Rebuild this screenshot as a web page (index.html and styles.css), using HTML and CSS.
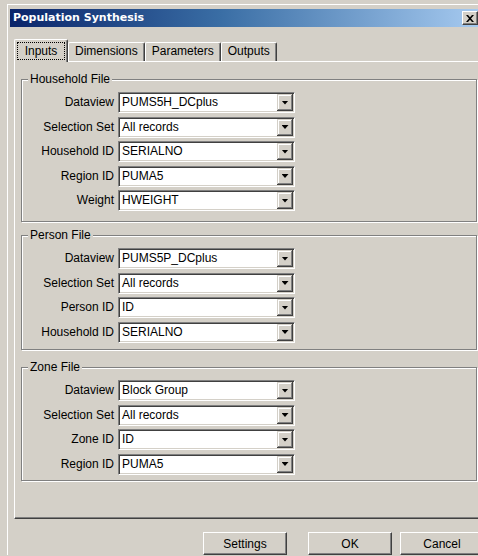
FILE: index.html
```html
<!DOCTYPE html>
<html lang="en">
<head>
<meta charset="utf-8">
<title>Population Synthesis</title>
<link rel="stylesheet" href="styles.css">
</head>
<body>
<div class="window">
  <div class="caption">
    <span class="caption-title">Population Synthesis</span>
    <span class="caption-close">
      <svg width="8" height="7" viewBox="0 0 8 7"><path d="M0 0h2l2 2.3L6 0h2L5 3.5 8 7H6L4 4.7 2 7H0l3-3.5z" fill="#000"/></svg>
    </span>
  </div>
  <div class="client">
    <div class="tabs">
      <div class="tab tab-active"><span class="tab-focus">Inputs</span></div>
      <div class="tab">Dimensions</div>
      <div class="tab">Parameters</div>
      <div class="tab">Outputs</div>
    </div>
    <div class="panel">
      <section class="group group-household">
        <div class="legend">Household File</div>
        <div class="fields">
          <label class="field-label">Dataview</label>
          <div class="combo"><span class="combo-value">PUMS5H_DCplus</span><span class="combo-drop"></span></div>
          <label class="field-label">Selection Set</label>
          <div class="combo"><span class="combo-value">All records</span><span class="combo-drop"></span></div>
          <label class="field-label">Household ID</label>
          <div class="combo"><span class="combo-value">SERIALNO</span><span class="combo-drop"></span></div>
          <label class="field-label">Region ID</label>
          <div class="combo"><span class="combo-value">PUMA5</span><span class="combo-drop"></span></div>
          <label class="field-label">Weight</label>
          <div class="combo"><span class="combo-value">HWEIGHT</span><span class="combo-drop"></span></div>
        </div>
      </section>
      <section class="group group-person">
        <div class="legend">Person File</div>
        <div class="fields">
          <label class="field-label">Dataview</label>
          <div class="combo"><span class="combo-value">PUMS5P_DCplus</span><span class="combo-drop"></span></div>
          <label class="field-label">Selection Set</label>
          <div class="combo"><span class="combo-value">All records</span><span class="combo-drop"></span></div>
          <label class="field-label">Person ID</label>
          <div class="combo"><span class="combo-value">ID</span><span class="combo-drop"></span></div>
          <label class="field-label">Household ID</label>
          <div class="combo"><span class="combo-value">SERIALNO</span><span class="combo-drop"></span></div>
        </div>
      </section>
      <section class="group group-zone">
        <div class="legend">Zone File</div>
        <div class="fields">
          <label class="field-label">Dataview</label>
          <div class="combo"><span class="combo-value">Block Group</span><span class="combo-drop"></span></div>
          <label class="field-label">Selection Set</label>
          <div class="combo"><span class="combo-value">All records</span><span class="combo-drop"></span></div>
          <label class="field-label">Zone ID</label>
          <div class="combo"><span class="combo-value">ID</span><span class="combo-drop"></span></div>
          <label class="field-label">Region ID</label>
          <div class="combo"><span class="combo-value">PUMA5</span><span class="combo-drop"></span></div>
        </div>
      </section>
    </div>
    <div class="buttons">
      <button class="btn btn-settings">Settings</button>
      <button class="btn btn-ok">OK</button>
      <button class="btn">Cancel</button>
    </div>
  </div>
</div>
</body>
</html>
```

FILE: styles.css
```css
html, body {
  margin: 0;
  background: #d4d0c8;
}

body {
  width: 478px;
  height: 556px;
  overflow: hidden;
  padding: 4px 0 0 7px;
  box-sizing: border-box;
  font-family: "Liberation Sans", Arial, sans-serif;
  font-size: 12px;
  color: #000;
}

/* dialog frame */
.window {
  width: 477px;
  border-top: 1px solid #fff;
  border-left: 1px solid #fff;
  padding: 4px 0 0 2px;
}

.caption {
  width: 470px;
  height: 18px;
  display: flex;
  align-items: center;
  justify-content: space-between;
  background: linear-gradient(to right, #0a246a 0%, #3a6ea5 45%, #a6caf0 100%);
}

.caption-title {
  padding-left: 3px;
  font-family: "DejaVu Sans", Verdana, sans-serif;
  font-weight: bold;
  font-size: 11px;
  color: #fff;
  line-height: 18px;
}

.caption-close {
  width: 16px;
  height: 14px;
  margin-right: 2px;
  box-sizing: border-box;
  background: #d4d0c8;
  border: 1px solid;
  border-color: #fff #404040 #404040 #fff;
  box-shadow: inset -1px -1px #808080;
  display: flex;
  align-items: center;
  justify-content: center;
}

.caption-close svg {
  display: block;
}

.client {
  padding: 12px 0 0 4px;
}

/* tab strip */
.tabs {
  display: flex;
  align-items: flex-end;
  padding-left: 2px;
  height: 22px;
}

.tab {
  height: 19px;
  box-sizing: border-box;
  padding: 0 6px 2px;
  border-top: 1px solid #fff;
  border-left: 1px solid #fff;
  border-right: 1px solid #404040;
  border-radius: 2px 2px 0 0;
  box-shadow: inset -1px 0 #808080;
  line-height: 16px;
  white-space: nowrap;
}

.tab-active {
  position: relative;
  z-index: 1;
  width: 54px;
  height: 23px;
  margin: 0 -2px -1px -2px;
  padding: 2px 0 0 2px;
  background: #d4d0c8;
}

.tab-active + .tab {
  margin-left: 2px;
}

.tab-focus {
  display: block;
  width: 48px;
  box-sizing: border-box;
  border: 1px dotted #000;
  text-align: center;
  line-height: 16px;
}

/* tab page */
.panel {
  width: 470px;
  height: 458px;
  box-sizing: border-box;
  border-top: 1px solid #fff;
  border-left: 1px solid #fff;
  border-right: 1px solid #404040;
  border-bottom: 1px solid #404040;
  box-shadow: inset -1px -1px #808080;
  padding: 17px 6px 0 6px;
}

/* etched group boxes */
.group {
  border: 1px solid #808080;
  box-shadow: inset 1px 1px #fff, 1px 1px #fff;
}

.group-household {
  padding-bottom: 10px;
}

.group-person {
  margin-top: 13px;
  padding-bottom: 6.5px;
}

.group-zone {
  margin-top: 17px;
  padding-bottom: 5.5px;
}

.legend {
  width: fit-content;
  margin: -8px 0 0 6px;
  padding: 0 2px;
  background: #d4d0c8;
  line-height: 14px;
}

.fields {
  display: grid;
  grid-template-columns: 92px 177px;
  column-gap: 4px;
  row-gap: 3.5px;
  margin-top: 6px;
}

.field-label {
  text-align: right;
  line-height: 21px;
  white-space: nowrap;
}

/* drop-down combo */
.combo {
  height: 21px;
  box-sizing: border-box;
  display: flex;
  align-items: stretch;
  background: #fff;
  border: 1px solid;
  border-color: #808080 #fff #fff #808080;
  box-shadow: inset 1px 1px #404040, inset -1px -1px #d4d0c8;
  padding: 1px;
}

.combo-value {
  flex: 1;
  padding-left: 2px;
  line-height: 17px;
  white-space: nowrap;
}

.combo-drop {
  width: 16px;
  display: flex;
  align-items: center;
  justify-content: center;
  background: #d4d0c8;
  box-shadow: inset -1px -1px #404040, inset 1px 1px #d4d0c8, inset -2px -2px #808080, inset 2px 2px #fff;
}

.combo-drop::after {
  content: "";
  width: 7px;
  height: 4px;
  background: #000;
  clip-path: polygon(0 0, 100% 0, 50% 100%);
}

/* dialog buttons */
.buttons {
  display: flex;
  justify-content: flex-end;
  width: 470px;
  margin-top: 13px;
}

.btn {
  width: 84px;
  height: 23px;
  box-sizing: border-box;
  padding: 0;
  margin: 0;
  font: inherit;
  color: #000;
  background: #d4d0c8;
  border: 1px solid;
  border-color: #fff #404040 #404040 #fff;
  box-shadow: inset -1px -1px #808080;
  border-radius: 0;
}

.btn-settings {
  margin-right: 21px;
}

.btn-ok {
  margin-right: 8px;
}
```
